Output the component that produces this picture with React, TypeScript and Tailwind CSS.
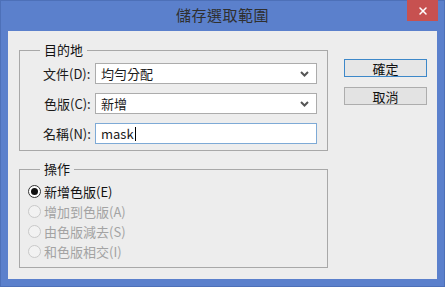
import { X } from 'lucide-react';

const font = { fontFamily: '"Noto Sans CJK TC", "Noto Sans", sans-serif' };

const Chevron = () => (
    <svg width="9" height="6" viewBox="0 0 9 6" className="shrink-0">
        <path d="M1 1 L4.5 4.5 L8 1" fill="none" stroke="#555" strokeWidth="2" />
    </svg>
);

const SelectBox = ({ value }: { value: string }) => (
    <div className="flex h-[21px] w-[222px] items-center justify-between border border-[#acacac] bg-white pl-[5px] pr-[7px] text-[13px] leading-none text-[#1a1a1a]">
        <span>{value}</span>
        <Chevron />
    </div>
);

const Radio = ({ label, checked }: { label: string; checked?: boolean }) => (
    <div className="flex h-[20px] items-center gap-[3px]">
        <span
            className={`flex h-[13px] w-[13px] items-center justify-center rounded-full border ${checked ? 'border-[#333] bg-white' : 'border-[#c9c9c9] bg-[#f2f2f2]'
                }`}
        >
            {checked && <span className="h-[7px] w-[7px] rounded-full bg-[#111]" />}
        </span>
        <span className={`text-[13px] leading-none ${checked ? 'text-[#111]' : 'text-[#a3a3a3]'}`}>{label}</span>
    </div>
);

export default function App() {
    return (
        <div
            className="flex h-[287px] w-[445px] flex-col border border-[#4d70b8] bg-[#5b80cc]"
            style={font}
        >
            {/* Title bar */}
            <div className="relative flex h-[30px] shrink-0 items-center justify-center pb-[2px]">
                <span className="text-[15px] tracking-[0.5px] text-[#2f2f2f]">儲存選取範圍</span>
                <div className="absolute right-[6px] top-[-1px] flex h-[21px] w-[31px] items-center justify-center bg-[#c75150]">
                    <X size={12} strokeWidth={3} color="#fff" />
                </div>
            </div>

            {/* Client area */}
            <div className="mx-[7px] mb-[7px] flex flex-1 bg-[#ededed] pl-[11px] pt-[11px]">
                <div className="flex w-[309px] flex-col gap-[10px]">
                    <fieldset className="border border-[#a8a8a8] pb-[6px] pl-[23px] pr-[9px] pt-[5px]">
                        <legend className="ml-[-3px] px-[4px] text-[13px] leading-[16px] text-[#111]">目的地</legend>
                        <div className="flex flex-col gap-[9px]">
                            <div className="flex items-center">
                                <span className="w-[52px] text-[13px] leading-none text-[#1a1a1a]">文件(D):</span>
                                <SelectBox value="均勻分配" />
                            </div>
                            <div className="flex items-center">
                                <span className="w-[52px] pl-[1px] text-[13px] leading-none text-[#1a1a1a]">色版(C):</span>
                                <SelectBox value="新增" />
                            </div>
                            <div className="flex items-center">
                                <span className="w-[52px] text-[13px] leading-none text-[#1a1a1a]">名稱(N):</span>
                                <div className="flex h-[21px] w-[222px] items-center border border-[#7eaad6] bg-white pl-[5px] text-[13px] leading-none text-[#1a1a1a]">
                                    <span>mask</span>
                                    <span className="ml-[1px] h-[14px] w-[1px] bg-black" />
                                </div>
                            </div>
                        </div>
                    </fieldset>

                    <fieldset className="border border-[#a8a8a8] pb-[6px] pl-[8px] pt-[4px]">
                        <legend className="ml-[12px] px-[4px] text-[13px] leading-[16px] text-[#111]">操作</legend>
                        <Radio label="新增色版(E)" checked />
                        <Radio label="增加到色版(A)" />
                        <Radio label="由色版減去(S)" />
                        <Radio label="和色版相交(I)" />
                    </fieldset>
                </div>

                {/* Buttons */}
                <div className="ml-[16px] flex flex-col gap-[10px] pt-[17px]">
                    <button className="h-[18px] w-[83px] border border-[#3d88c9] bg-[#e6e6e6] text-[13px] leading-none text-[#111]">
                        確定
                    </button>
                    <button className="h-[18px] w-[83px] border border-[#adadad] bg-[#e3e3e3] text-[13px] leading-none text-[#111]">
                        取消
                    </button>
                </div>
            </div>
        </div>
    );
}
